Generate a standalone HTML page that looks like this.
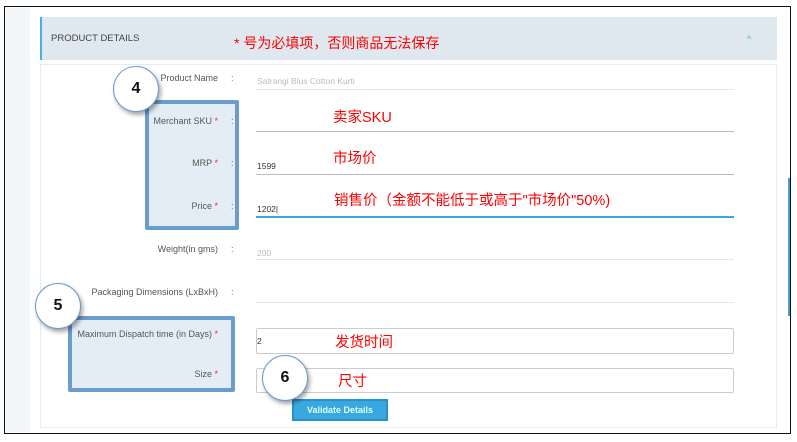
<!DOCTYPE html>
<html><head><meta charset="utf-8"><style>
*{margin:0;padding:0;box-sizing:border-box}
body{width:797px;height:442px;background:#fff;position:relative;overflow:hidden;font-family:"Liberation Sans",sans-serif}
.a{position:absolute}
.lbl{position:absolute;font-size:9px;color:#555;text-align:right;width:220px}
.colon{position:absolute;font-size:9px;color:#666;left:231px}
.line{position:absolute;left:256px;width:478px;height:1px;background:#ccc}
.val{position:absolute;left:257px;font-size:8.5px;color:#333}
.cn{position:absolute;color:#f00;font-family:"Liberation Sans","Noto Sans CJK SC",sans-serif;font-size:14.5px}
.st{color:#d33}
.circ{position:absolute;width:46px;height:46px;border-radius:50%;background:#fff;border:1.5px solid #6a9ccc;box-shadow:2px 3px 4px rgba(0,0,0,.35);font:bold 16px "Liberation Sans",sans-serif;text-align:center;line-height:43px;color:#111}
.box{position:absolute;border:4px solid #6a9ccc;background:rgba(210,225,240,.6);border-radius:2px}
</style></head><body>
<div class="a" style="left:4px;top:6px;width:787px;height:428px;border:1.5px solid #111"></div>
<div class="a" style="left:6px;top:8px;width:24px;height:424px;background:#f3f6f9"></div>
<div class="a" style="left:40px;top:17px;width:737px;height:43px;background:#dfe8ef;border-left:2px solid #4ab0e0"></div>
<div class="a" style="left:51px;top:33px;font-size:9.5px;color:#444">PRODUCT DETAILS</div>
<div class="cn" style="left:234px;top:33px;font-size:14px">* 号为必填项，否则商品无法保存</div>
<div class="a" style="left:747px;top:34px;font-size:9px;color:#4ab0e0">^</div>
<div class="a" style="left:40px;top:64px;width:737px;height:364px;border:1px solid #e3ecf2"></div>
<div class="a" style="left:788px;top:178px;width:2px;height:138px;background:#4a9ad0"></div>

<div class="box" style="left:145px;top:100px;width:94px;height:130px"></div>
<div class="box" style="left:68px;top:316px;width:167px;height:76px"></div>

<div class="lbl" style="left:-2px;top:73px">Product Name</div><div class="colon" style="top:73px">:</div>
<div class="val" style="top:76px;color:#bbb">Satrangi Blus Cotton Kurti</div><div class="line" style="top:89px;background:#e6e6e6"></div>
<div class="lbl" style="left:-2px;top:116px">Merchant SKU <span class="st">*</span></div><div class="colon" style="top:116px">:</div>
<div class="line" style="top:131px;background:#bbb"></div>
<div class="cn" style="left:333px;top:106px">卖家SKU</div>
<div class="lbl" style="left:-2px;top:158px">MRP <span class="st">*</span></div><div class="colon" style="top:158px">:</div>
<div class="val" style="top:161px">1599</div><div class="line" style="top:174px;background:#bbb"></div>
<div class="cn" style="left:333px;top:147px">市场价</div>
<div class="lbl" style="left:-2px;top:201px">Price <span class="st">*</span></div><div class="colon" style="top:201px">:</div>
<div class="val" style="top:204px">1202|</div><div class="a" style="left:256px;width:478px;top:216px;height:1.5px;background:#3aa8e0"></div>
<div class="cn" style="left:334px;top:189px">销售价（金额不能低于或高于"市场价"50%)</div>
<div class="lbl" style="left:-2px;top:244px">Weight(in gms)</div><div class="colon" style="top:244px">:</div>
<div class="val" style="top:248px;color:#bbb">200</div><div class="line" style="top:259px;background:#e6e6e6"></div>
<div class="lbl" style="left:-2px;top:287px">Packaging Dimensions (LxBxH)</div><div class="colon" style="top:287px">:</div>
<div class="line" style="top:302px;background:#e6e6e6"></div>
<div class="lbl" style="left:-2px;top:329px">Maximum Dispatch time (in Days) <span class="st">*</span></div>
<div class="a" style="left:256px;top:328px;width:478px;height:26px;border:1px solid #ccc;border-radius:2px"></div>
<div class="val" style="top:336px">2</div>
<div class="cn" style="left:335px;top:331px">发货时间</div>
<div class="lbl" style="left:-2px;top:369px">Size <span class="st">*</span></div>
<div class="a" style="left:256px;top:368px;width:478px;height:25px;border:1px solid #ccc;border-radius:2px"></div>
<div class="cn" style="left:338px;top:370px">尺寸</div>
<div class="a" style="left:292px;top:399px;width:96px;height:22px;background:#3aa8e0;border:2px solid #2a90c8;color:#dff;font-size:9px;font-weight:bold;text-align:center;line-height:18px">Validate Details</div>

<div class="circ" style="left:113px;top:66px">4</div>
<div class="circ" style="left:35px;top:283px">5</div>
<div class="circ" style="left:262px;top:355px">6</div>
</body></html>
